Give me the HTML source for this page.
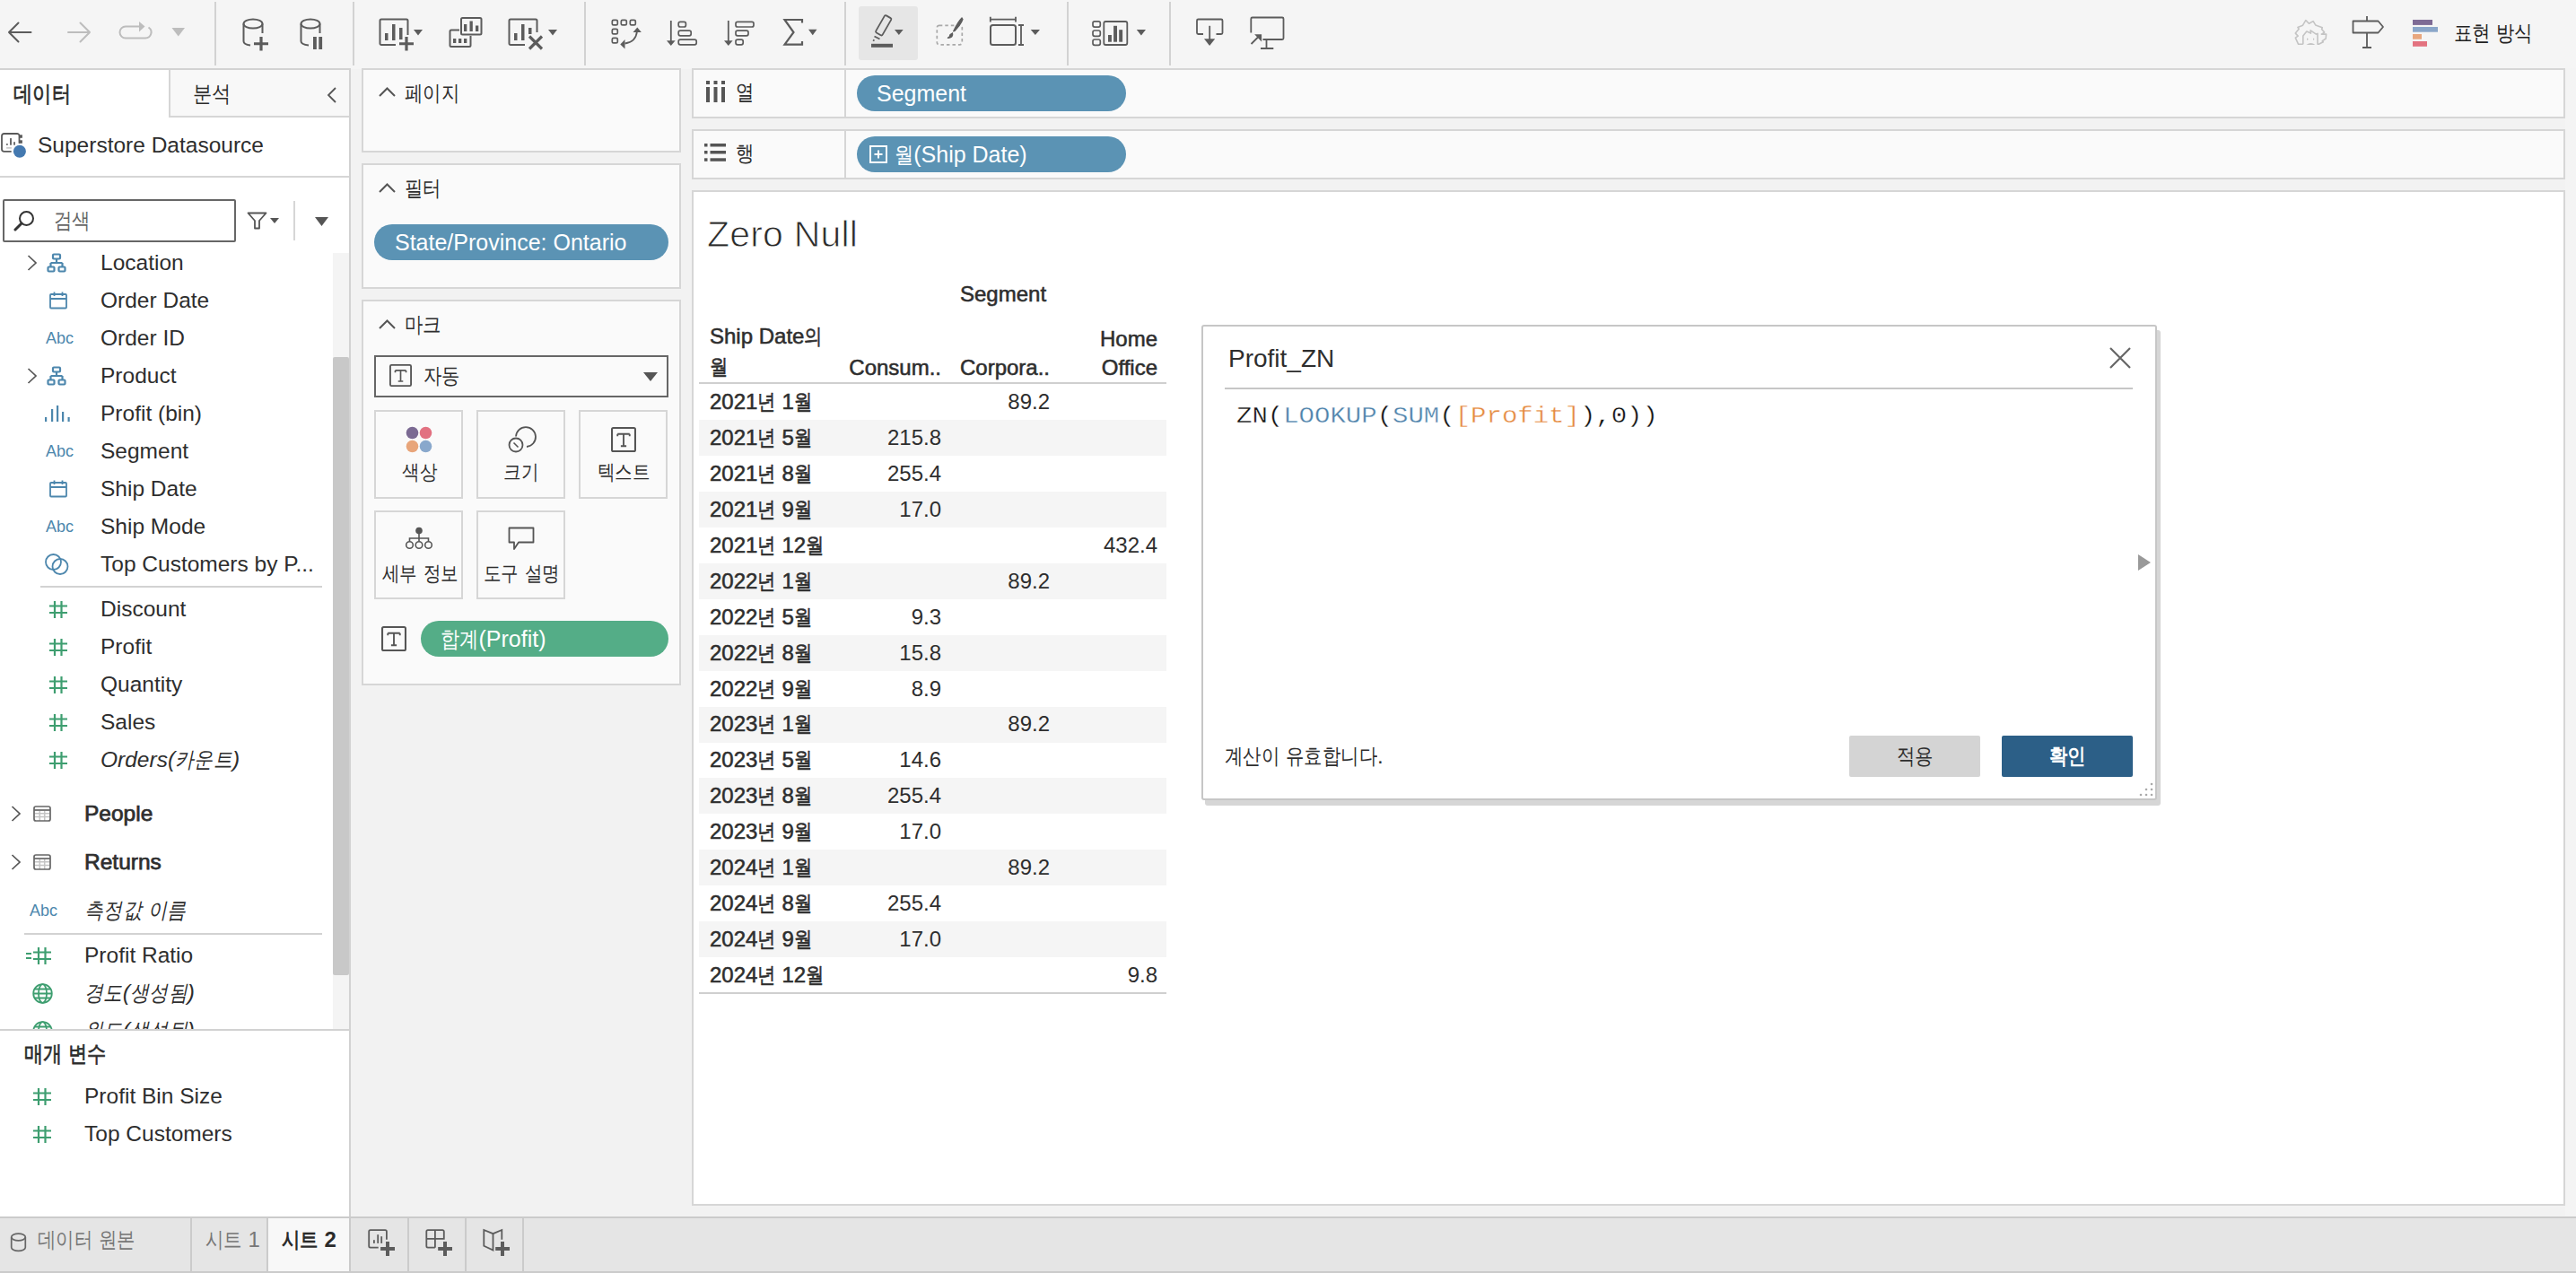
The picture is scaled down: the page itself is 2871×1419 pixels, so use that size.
<!DOCTYPE html>
<html><head><meta charset="utf-8">
<style>
*{box-sizing:border-box;margin:0;padding:0}
html,body{width:2871px;height:1419px;overflow:hidden}
body{position:relative;background:#f2f2f2;font-family:"Liberation Sans",sans-serif;color:#2e2e2e}
.a{position:absolute}
.t{position:absolute;white-space:nowrap}
svg{position:absolute;overflow:visible}
.k{display:inline-block;transform:scaleX(.85);transform-origin:0 50%}
.sb{-webkit-text-stroke:0.5px currentColor}
#toolbar{left:0;top:0;width:2871px;height:77px;background:#f5f5f5}
.sep{position:absolute;top:2px;width:2px;height:71px;background:#d2d2d2}
#left{left:0;top:76px;width:391px;height:1281px;background:#fff;border-right:2px solid #d2d2d2;border-top:2px solid #d2d2d2}
.card{position:absolute;background:#fafafa;border:2px solid #d6d6d6}
.shelf{position:absolute;background:#fafafa;border:2px solid #d6d6d6}
.pill{position:absolute;border-radius:20px;color:#fff;font-size:25px;line-height:40px;white-space:nowrap}
.fl{font-size:24.5px;line-height:30px;color:#2e2e2e}
.ic{color:#4d87ad}
.hash{color:#3e9e70}
.row{position:absolute;left:779px;width:521px;height:40px}
.rs{background:#f5f5f5}
.rl{position:absolute;left:12px;top:0;line-height:40px;font-size:24.5px;font-weight:bold;color:#2e2e2e;white-space:nowrap}
.rv{position:absolute;top:0;line-height:40px;font-size:24.5px;color:#2e2e2e;text-align:right;white-space:nowrap}
</style></head><body>

<!-- TOOLBAR -->
<div id="toolbar" class="a"></div>
<div class="sep" style="left:239px"></div>
<div class="sep" style="left:393px"></div>
<div class="sep" style="left:651px"></div>
<div class="sep" style="left:941px"></div>
<div class="sep" style="left:1189px"></div>
<div class="sep" style="left:1303px"></div>
<div class="a" style="left:957px;top:7px;width:66px;height:60px;background:#e6e6e6;border-radius:3px"></div>
<svg style="left:0;top:0" width="2871" height="77"><path d="M34.5 36 H10 M20.5 25.5 L10 36 L20.5 46.5" fill="none" stroke="#5c5c5c" stroke-width="2" stroke-linecap="round" stroke-linejoin="round"/><path d="M76 36 H100 M89.5 25.5 L100 36 L89.5 46.5" fill="none" stroke="#bdbdbd" stroke-width="2" stroke-linecap="round" stroke-linejoin="round"/><path d="M155 29.5 H140 A6.5 6.5 0 0 0 140 42.5 H162 A6.5 6.5 0 0 0 165.5 30.5" fill="none" stroke="#bdbdbd" stroke-width="2"/><path d="M155 24 L161.5 29.5 L155 35.5 Z" fill="#bdbdbd"/><path d="M191.5 31 H206 L198.75 40.5 Z" fill="#bdbdbd"/><ellipse cx="282" cy="26.5" rx="10.5" ry="5" fill="none" stroke="#5c5c5c" stroke-width="2"/><path d="M271.5 26.5 V46 Q271.5 49.5 279 50.5 M292.5 26.5 V37" fill="none" stroke="#5c5c5c" stroke-width="2"/><path d="M291 41 V56.5 M283 48.75 H299" stroke="#5c5c5c" stroke-width="3.2"/><ellipse cx="346" cy="26.5" rx="10.5" ry="5" fill="none" stroke="#5c5c5c" stroke-width="2"/><path d="M335.5 26.5 V46 Q335.5 49.5 344 50.5 M356.5 26.5 V37" fill="none" stroke="#5c5c5c" stroke-width="2"/><rect x="349" y="41" width="3.8" height="14" fill="#5c5c5c"/><rect x="355.3" y="41" width="3.8" height="14" fill="#5c5c5c"/><path d="M441 50 H425 A1.5 1.5 0 0 1 423.5 48.5 V23 A1.5 1.5 0 0 1 425 21.5 H453 A1.5 1.5 0 0 1 454.5 23 V39" fill="none" stroke="#5c5c5c" stroke-width="2"/><rect x="429" y="37" width="3.5" height="8" fill="#5c5c5c"/><rect x="437" y="27" width="3.5" height="18" fill="#5c5c5c"/><rect x="445" y="31" width="3.5" height="13" fill="#5c5c5c"/><path d="M453 41 V56.5 M445 48.75 H461" stroke="#5c5c5c" stroke-width="3.2"/><path d="M461 33 H471 L466 39.5 Z" fill="#5c5c5c"/><rect x="514" y="20" width="22.5" height="18.5" rx="1.5" fill="none" stroke="#5c5c5c" stroke-width="2"/><rect x="517" y="27" width="3.3" height="8" fill="#5c5c5c"/><rect x="523.5" y="23.5" width="3.3" height="11.5" fill="#5c5c5c"/><rect x="530" y="28.5" width="3.3" height="6.5" fill="#5c5c5c"/><path d="M512 33.5 H503 A1.5 1.5 0 0 0 501.5 35 V50.5 A1.5 1.5 0 0 0 503 52 H523 A1.5 1.5 0 0 0 524.5 50.5 V40" fill="none" stroke="#5c5c5c" stroke-width="2"/><rect x="505" y="43" width="3.3" height="5" fill="#5c5c5c"/><rect x="511" y="43" width="3.3" height="5" fill="#5c5c5c"/><rect x="517" y="43" width="3.3" height="5" fill="#5c5c5c"/><path d="M585 50 H569 A1.5 1.5 0 0 1 567.5 48.5 V23 A1.5 1.5 0 0 1 569 21.5 H597 A1.5 1.5 0 0 1 598.5 23 V36" fill="none" stroke="#5c5c5c" stroke-width="2"/><rect x="573" y="37" width="3.5" height="8" fill="#5c5c5c"/><rect x="581" y="27" width="3.5" height="18" fill="#5c5c5c"/><rect x="589" y="31" width="3.5" height="7" fill="#5c5c5c"/><path d="M590 40.5 L604 54.5 M604 40.5 L590 54.5" stroke="#5c5c5c" stroke-width="3.2"/><path d="M611 33 H621 L616 39.5 Z" fill="#5c5c5c"/><rect x="682.3" y="22.3" width="6" height="5.6" rx="1.5" fill="none" stroke="#5c5c5c" stroke-width="1.7"/><rect x="692.3" y="22.3" width="6" height="5.6" rx="1.5" fill="none" stroke="#5c5c5c" stroke-width="1.7"/><rect x="702.3" y="22.3" width="6" height="5.6" rx="1.5" fill="none" stroke="#5c5c5c" stroke-width="1.7"/><rect x="682.3" y="32.3" width="6" height="5.6" rx="1.5" fill="none" stroke="#5c5c5c" stroke-width="1.7"/><rect x="682.3" y="42.3" width="6" height="5.6" rx="1.5" fill="none" stroke="#5c5c5c" stroke-width="1.7"/><path d="M710 35 Q708.5 47 696.5 48.5" fill="none" stroke="#5c5c5c" stroke-width="1.8"/><path d="M710.3 30.5 L714.8 36 L705.5 36 Z" fill="#5c5c5c"/><path d="M691.3 49.5 L696.5 44 L696.5 54.5 Z" fill="#5c5c5c"/><path d="M747.8 23 V46" stroke="#5c5c5c" stroke-width="1.8"/><path d="M743 45.3 H752.6 L747.8 51 Z" fill="#5c5c5c"/><rect x="756.2" y="24.4" width="8.2" height="5.6" rx="2" fill="none" stroke="#5c5c5c" stroke-width="1.7"/><rect x="756.2" y="34.2" width="14" height="5.6" rx="2" fill="none" stroke="#5c5c5c" stroke-width="1.7"/><rect x="756.2" y="44.2" width="20" height="5.6" rx="2" fill="none" stroke="#5c5c5c" stroke-width="1.7"/><path d="M811.8 23 V46" stroke="#5c5c5c" stroke-width="1.8"/><path d="M807 45.3 H816.6 L811.8 51 Z" fill="#5c5c5c"/><rect x="820" y="24.4" width="20" height="5.6" rx="2" fill="none" stroke="#5c5c5c" stroke-width="1.7"/><rect x="820" y="34.2" width="14" height="5.6" rx="2" fill="none" stroke="#5c5c5c" stroke-width="1.7"/><rect x="820" y="44.2" width="8.2" height="5.6" rx="2" fill="none" stroke="#5c5c5c" stroke-width="1.7"/><path d="M894 25.5 V22 H874.5 L884.5 36 L874.5 49.7 H894 V46" fill="none" stroke="#5c5c5c" stroke-width="2.2"/><path d="M901 32.8 H910.5 L905.75 39.3 Z" fill="#5c5c5c"/><g transform="rotate(30 984 29)"><rect x="980" y="17" width="8.5" height="22" rx="1.5" fill="none" stroke="#5c5c5c" stroke-width="1.8"/></g><path d="M974.5 40.5 L980.5 43.5 M973 44.5 L974.5 45.5" stroke="#5c5c5c" stroke-width="1.8"/><rect x="971" y="48.8" width="24" height="4" fill="#5c5c5c"/><path d="M997 33.1 H1006.7 L1001.85 38.9 Z" fill="#5c5c5c"/><rect x="1044.3" y="28.3" width="28" height="21.5" rx="2.5" fill="none" stroke="#a9a9a9" stroke-width="1.7" stroke-dasharray="3.5 3"/><path d="M1072 20 Q1068 24 1063 34 Q1062 35.5 1064 34.5 Q1071 27 1073 21.5 Z" fill="#5c5c5c" stroke="#5c5c5c" stroke-width="1.2"/><path d="M1061.5 37 Q1063 42 1056 42.5 Q1059 41 1059 38.5 Z" fill="#5c5c5c" stroke="#5c5c5c" stroke-width="1.2"/><path d="M1103.8 18.8 V24.6 M1132 18.8 V24.6 M1103.8 21.7 H1132" stroke="#5c5c5c" stroke-width="1.8"/><rect x="1104" y="28" width="28" height="22" rx="2.5" fill="none" stroke="#5c5c5c" stroke-width="2"/><path d="M1135 28 H1141 M1138 28 V50 M1135 50 H1141" stroke="#5c5c5c" stroke-width="1.8"/><path d="M1148.7 33 H1159 L1153.85 39 Z" fill="#5c5c5c"/><rect x="1218" y="23.8" width="8.3" height="6.3" rx="2" fill="none" stroke="#5c5c5c" stroke-width="1.7"/><rect x="1218" y="34" width="8.3" height="6.3" rx="2" fill="none" stroke="#5c5c5c" stroke-width="1.7"/><rect x="1218" y="44" width="8.3" height="6.3" rx="2" fill="none" stroke="#5c5c5c" stroke-width="1.7"/><rect x="1230.3" y="24" width="26" height="26" rx="2" fill="none" stroke="#5c5c5c" stroke-width="1.8"/><rect x="1235" y="39" width="3.9" height="7.7" fill="#5c5c5c"/><rect x="1241.1" y="28.8" width="3.9" height="17.9" fill="#5c5c5c"/><rect x="1247.2" y="33.2" width="3.9" height="13.5" fill="#5c5c5c"/><path d="M1266.8 33 H1277 L1271.9 39.5 Z" fill="#5c5c5c"/><path d="M1341 38 H1335.5 A1.5 1.5 0 0 1 1334 36.5 V23 A1.5 1.5 0 0 1 1335.5 21.5 H1361 A1.5 1.5 0 0 1 1362.5 23 V36.5 A1.5 1.5 0 0 1 1361 38 H1355.5" fill="none" stroke="#5c5c5c" stroke-width="1.8"/><path d="M1348.2 28.8 V44" stroke="#5c5c5c" stroke-width="1.8"/><path d="M1342 43.3 H1354.2 L1348.1 51.1 Z" fill="#5c5c5c"/><path d="M1394.3 36.5 V21 A1.5 1.5 0 0 1 1395.8 19.5 H1429 A1.5 1.5 0 0 1 1430.5 21 V42.5 A1.5 1.5 0 0 1 1429 44 H1407.5" fill="none" stroke="#5c5c5c" stroke-width="1.8"/><path d="M1411.5 44 V53.5 M1405 54 H1419.3" stroke="#5c5c5c" stroke-width="1.8"/><path d="M1394.5 49 L1402 41.5" stroke="#5c5c5c" stroke-width="1.8"/><path d="M1400 39 H1405.3 V44.5 Z" fill="#5c5c5c" stroke="#5c5c5c" stroke-width="1.6"/><g fill="none" stroke="#c4c4c4" stroke-width="1.6" stroke-linejoin="round"><path d="M2566.8 49.3 H2561.6 L2558.3 42.1 L2561.2 40.1 L2558.3 37.1 L2562.2 32.2 L2560.9 30.5 L2566.5 28.2 L2569.8 22.6 L2573.4 26.2 L2578.1 23.6 L2580.7 27.9 L2588.3 30.8 L2587.6 32.5 L2590.6 36.1 L2587.3 38.1 L2592.6 38.1 L2592.2 43 L2588.3 45.7 L2589.3 46.7 L2584.3 49.3 H2583"/><path d="M2566.8 49.3 V40.1 L2570.8 35.1 L2575.4 37.1 L2575.1 33.8 L2581.4 38.1 L2583 37.4 V49.7"/></g><g fill="#c4c4c4"><path d="M2571 42.3 L2573 43.7 L2571 45.1 Z"/><path d="M2578 42.3 L2579.6 43.7 L2578 45.1 Z"/><path d="M2570.5 50 Q2575.4 46 2580.4 50 Z"/></g><path d="M2622.5 23.5 H2650.5 L2656 30 L2650.5 36.5 H2622.5 Z" fill="none" stroke="#5c5c5c" stroke-width="1.8" stroke-linejoin="round"/><path d="M2638 18 V23.5 M2638 36.5 V53 M2633 53 H2643" stroke="#5c5c5c" stroke-width="1.8"/><rect x="2689" y="22" width="22" height="5.9" fill="#7e6b95"/><rect x="2689" y="30" width="28" height="5.7" fill="#8aa6c9"/><rect x="2689" y="38" width="10" height="5.7" fill="#e8a77e"/><rect x="2689" y="46" width="16" height="5.8" fill="#e3727f"/></svg>
<div class="t" style="left:2735px;top:19px;font-size:24px;line-height:36px;color:#222"><span class="k" style="margin-right:-0.30em">표현</span> <span class="k" style="margin-right:-0.30em">방식</span></div>

<!-- LEFT PANEL -->
<div id="left" class="a"></div>

<div class="a" style="left:188px;top:78px;width:201px;height:53px;background:#f8f8f8;border-left:2px solid #d6d6d6;border-bottom:2px solid #d6d6d6"></div>
<div class="t" style="left:15px;top:89px;font-size:25px;line-height:30px;font-weight:normal;-webkit-text-stroke:0.7px #2b2b2b;color:#2b2b2b"><span class="k" style="margin-right:-0.45em">데이터</span></div>
<div class="t" style="left:215px;top:89px;font-size:25px;line-height:30px;color:#2b2b2b"><span class="k" style="margin-right:-0.30em">분석</span></div>
<svg style="left:364px;top:97px" width="11" height="18"><path d="M10 1 L2 9 L10 17" fill="none" stroke="#555" stroke-width="1.8"/></svg>
<svg style="left:0;top:140px" width="32" height="40"><path d="M12.7 28.8 H4.5 A2.5 2.5 0 0 1 2 26.3 V11.5 A2.5 2.5 0 0 1 4.5 9 H19 A2.5 2.5 0 0 1 21.5 11.5 V19.8" fill="none" stroke="#5a5a5a" stroke-width="1.8"/><rect x="21.2" y="10.3" width="3.7" height="3.5" fill="#5a5a5a"/><rect x="21.2" y="16.3" width="3.7" height="3.5" fill="#5a5a5a"/><rect x="6.9" y="20.2" width="1.9" height="1.6" fill="#5a5a5a"/><rect x="11.1" y="14.1" width="1.8" height="7.6" fill="#5a5a5a"/><rect x="15.2" y="18.2" width="1.7" height="3.5" fill="#5a5a5a"/><rect x="7.1" y="24" width="5.8" height="1.8" fill="#cfcfcf"/><circle cx="21.9" cy="28.8" r="7" fill="#4479b0"/></svg>
<div class="t fl" style="left:42px;top:147px;">Superstore Datasource</div>
<div class="a" style="left:0;top:196px;width:389px;height:2px;background:#d6d6d6"></div>
<div class="a" style="left:3px;top:222px;width:260px;height:48px;border:2px solid #666;background:#fff;border-radius:2px"></div>
<svg style="left:15px;top:234px" width="24" height="24" viewBox="0 0 24 24"><circle cx="14.5" cy="9.5" r="7.5" fill="none" stroke="#333" stroke-width="2"/><path d="M9 15 L2 22" stroke="#333" stroke-width="3" stroke-linecap="round"/></svg>
<div class="t" style="left:60px;top:231px;font-size:24px;line-height:30px;color:#666"><span class="k" style="margin-right:-0.30em">검색</span></div>
<svg style="left:275px;top:236px" width="36" height="20" viewBox="0 0 36 20"><path d="M1.5 1.5 H21.5 L14 10 V18.5 H9 V10 Z" fill="none" stroke="#555" stroke-width="1.8" stroke-linejoin="round"/><path d="M26 7 H36 L31 13 Z" fill="#555"/></svg>
<div class="a" style="left:327px;top:224px;width:2px;height:44px;background:#d6d6d6"></div>
<svg style="left:351px;top:242px" width="15" height="10"><path d="M0 0 H15 L7.5 10 Z" fill="#555"/></svg>
<div class="a" style="left:371px;top:282px;width:18px;height:865px;background:#f4f4f4"></div>
<div class="a" style="left:371px;top:398px;width:18px;height:689px;background:#c8c8c8;border-radius:2px"></div>
<svg style="left:30px;top:284px" width="12" height="18"><path d="M1.5 1 L10 9 L1.5 17" fill="none" stroke="#555" stroke-width="1.7"/></svg>
<svg style="left:52px;top:282px" width="22" height="22" viewBox="0 0 22 22"><g fill="none" stroke="#4d87ad" stroke-width="2.2"><rect x="7" y="1.5" width="8" height="5" rx="1"/><path d="M11 6.5 V11 M4.5 11 H17.5 M4.5 11 V15.5 M17.5 11 V15.5"/><rect x="1.5" y="15.5" width="7" height="5" rx="1"/><rect x="13.5" y="15.5" width="7" height="5" rx="1"/></g></svg>
<div class="t fl" style="left:112px;top:278px;">Location</div>
<svg style="left:55px;top:325px" width="20" height="20" viewBox="0 0 20 20"><g fill="none" stroke="#4d87ad" stroke-width="1.8"><rect x="1" y="3" width="18" height="15.5" rx="1"/><path d="M1 8 H19 M5.5 0.5 V5 M14.5 0.5 V5"/></g></svg>
<div class="t fl" style="left:112px;top:320px;">Order Date</div>
<div class="t" style="left:51px;top:364px;font-size:18px;line-height:26px;color:#4d87ad">Abc</div>
<div class="t fl" style="left:112px;top:362px;">Order ID</div>
<svg style="left:30px;top:410px" width="12" height="18"><path d="M1.5 1 L10 9 L1.5 17" fill="none" stroke="#555" stroke-width="1.7"/></svg>
<svg style="left:52px;top:408px" width="22" height="22" viewBox="0 0 22 22"><g fill="none" stroke="#4d87ad" stroke-width="2.2"><rect x="7" y="1.5" width="8" height="5" rx="1"/><path d="M11 6.5 V11 M4.5 11 H17.5 M4.5 11 V15.5 M17.5 11 V15.5"/><rect x="1.5" y="15.5" width="7" height="5" rx="1"/><rect x="13.5" y="15.5" width="7" height="5" rx="1"/></g></svg>
<div class="t fl" style="left:112px;top:404px;">Product</div>
<svg style="left:50px;top:452px" width="28" height="18" viewBox="0 0 28 18"><g fill="#4d87ad"><rect x="0" y="13" width="2.2" height="5"/><rect x="7" y="4" width="2.2" height="14"/><rect x="13" y="0" width="2.2" height="18"/><rect x="19" y="7" width="2.2" height="11"/><rect x="25.5" y="13" width="2.2" height="5"/></g></svg>
<div class="t fl" style="left:112px;top:446px;">Profit (bin)</div>
<div class="t" style="left:51px;top:490px;font-size:18px;line-height:26px;color:#4d87ad">Abc</div>
<div class="t fl" style="left:112px;top:488px;">Segment</div>
<svg style="left:55px;top:535px" width="20" height="20" viewBox="0 0 20 20"><g fill="none" stroke="#4d87ad" stroke-width="1.8"><rect x="1" y="3" width="18" height="15.5" rx="1"/><path d="M1 8 H19 M5.5 0.5 V5 M14.5 0.5 V5"/></g></svg>
<div class="t fl" style="left:112px;top:530px;">Ship Date</div>
<div class="t" style="left:51px;top:574px;font-size:18px;line-height:26px;color:#4d87ad">Abc</div>
<div class="t fl" style="left:112px;top:572px;">Ship Mode</div>
<svg style="left:50px;top:617px" width="27" height="24" viewBox="0 0 27 24"><g fill="none" stroke="#4d87ad" stroke-width="1.8"><circle cx="9.5" cy="9.5" r="8.5"/><circle cx="17" cy="14.5" r="8.5"/></g></svg>
<div class="t fl" style="left:112px;top:614px;">Top Customers by P...</div>
<div class="a" style="left:45px;top:653px;width:314px;height:2px;background:#d2d2d2"></div>
<svg style="left:55px;top:670px" width="20" height="19" viewBox="0 0 20 19"><g stroke="#3e9e70" stroke-width="2.2" fill="none"><path d="M6 0 V19 M13.5 0 V19 M0 5.5 H20 M0 13 H20"/></g></svg>
<div class="t fl" style="left:112px;top:664px;">Discount</div>
<svg style="left:55px;top:712px" width="20" height="19" viewBox="0 0 20 19"><g stroke="#3e9e70" stroke-width="2.2" fill="none"><path d="M6 0 V19 M13.5 0 V19 M0 5.5 H20 M0 13 H20"/></g></svg>
<div class="t fl" style="left:112px;top:706px;">Profit</div>
<svg style="left:55px;top:754px" width="20" height="19" viewBox="0 0 20 19"><g stroke="#3e9e70" stroke-width="2.2" fill="none"><path d="M6 0 V19 M13.5 0 V19 M0 5.5 H20 M0 13 H20"/></g></svg>
<div class="t fl" style="left:112px;top:748px;">Quantity</div>
<svg style="left:55px;top:796px" width="20" height="19" viewBox="0 0 20 19"><g stroke="#3e9e70" stroke-width="2.2" fill="none"><path d="M6 0 V19 M13.5 0 V19 M0 5.5 H20 M0 13 H20"/></g></svg>
<div class="t fl" style="left:112px;top:790px;">Sales</div>
<svg style="left:55px;top:838px" width="20" height="19" viewBox="0 0 20 19"><g stroke="#3e9e70" stroke-width="2.2" fill="none"><path d="M6 0 V19 M13.5 0 V19 M0 5.5 H20 M0 13 H20"/></g></svg>
<div class="t fl" style="left:112px;top:832px;font-style:italic">Orders(<span class="k" style="margin-right:-0.45em">카운트</span>)</div>
<svg style="left:12px;top:898px" width="12" height="18"><path d="M1.5 1 L10 9 L1.5 17" fill="none" stroke="#555" stroke-width="1.7"/></svg>
<svg style="left:37px;top:898px" width="20" height="18" viewBox="0 0 20 18"><g fill="none" stroke="#c4c4c4" stroke-width="1.5"><path d="M2 8.7 H18 M2 12.5 H18 M7.3 6 V17 M12.7 6 V17"/></g><g fill="none" stroke="#666" stroke-width="1.7"><rect x="1" y="1" width="18" height="16" rx="2"/><path d="M1 5 H19"/></g></svg>
<div class="t fl" style="left:94px;top:892px;-webkit-text-stroke:0.75px #2e2e2e">People</div>
<svg style="left:12px;top:952px" width="12" height="18"><path d="M1.5 1 L10 9 L1.5 17" fill="none" stroke="#555" stroke-width="1.7"/></svg>
<svg style="left:37px;top:952px" width="20" height="18" viewBox="0 0 20 18"><g fill="none" stroke="#c4c4c4" stroke-width="1.5"><path d="M2 8.7 H18 M2 12.5 H18 M7.3 6 V17 M12.7 6 V17"/></g><g fill="none" stroke="#666" stroke-width="1.7"><rect x="1" y="1" width="18" height="16" rx="2"/><path d="M1 5 H19"/></g></svg>
<div class="t fl" style="left:94px;top:946px;-webkit-text-stroke:0.75px #2e2e2e">Returns</div>
<div class="t" style="left:33px;top:1002px;font-size:18px;line-height:26px;color:#4d87ad">Abc</div>
<div class="t fl" style="left:94px;top:1000px;font-style:italic"><span class="k" style="margin-right:-0.45em">측정값</span> <span class="k" style="margin-right:-0.30em">이름</span></div>
<div class="a" style="left:27px;top:1040px;width:332px;height:2px;background:#d2d2d2"></div>
<svg style="left:37px;top:1056px" width="20" height="19" viewBox="0 0 20 19"><g stroke="#3e9e70" stroke-width="2.2" fill="none"><path d="M6 0 V19 M13.5 0 V19 M0 5.5 H20 M0 13 H20"/></g></svg><svg style="left:29px;top:1056px" width="8" height="19" viewBox="0 0 8 19"><g stroke="#3e9e70" stroke-width="2"><path d="M0 7 H6 M0 12 H6"/></g></svg>
<div class="t fl" style="left:94px;top:1050px;">Profit Ratio</div>
<svg style="left:36px;top:1096px" width="23" height="23" viewBox="0 0 23 23"><g fill="none" stroke="#3e9e70" stroke-width="1.8"><circle cx="11.5" cy="11.5" r="10.3"/><ellipse cx="11.5" cy="11.5" rx="4.5" ry="10.3"/><path d="M1.2 11.5 H21.8 M2.8 6.5 H20.2 M2.8 16.5 H20.2"/></g></svg>
<div class="t fl" style="left:94px;top:1092px;font-style:italic"><span class="k" style="margin-right:-0.30em">경도</span>(<span class="k" style="margin-right:-0.45em">생성됨</span>)</div>
<div class="a" style="left:0;top:1130px;width:371px;height:17px;overflow:hidden"><svg style="left:36px;top:8px" width="23" height="23" viewBox="0 0 23 23"><g fill="none" stroke="#3e9e70" stroke-width="1.8"><circle cx="11.5" cy="11.5" r="10.3"/><ellipse cx="11.5" cy="11.5" rx="4.5" ry="10.3"/><path d="M1.2 11.5 H21.8 M2.8 6.5 H20.2 M2.8 16.5 H20.2"/></g></svg><div class="t fl" style="left:94px;top:4px;font-style:italic"><span class="k" style="margin-right:-0.30em">위도</span>(<span class="k" style="margin-right:-0.45em">생성됨</span>)</div></div>
<div class="a" style="left:0;top:1147px;width:389px;height:2px;background:#d2d2d2"></div>
<div class="t" style="left:27px;top:1160px;font-size:24.5px;line-height:30px;font-weight:normal;-webkit-text-stroke:0.7px #2b2b2b;color:#2b2b2b"><span class="k" style="margin-right:-0.30em">매개</span> <span class="k" style="margin-right:-0.30em">변수</span></div>
<svg style="left:37px;top:1213px" width="20" height="19" viewBox="0 0 20 19"><g stroke="#3e9e70" stroke-width="2.2" fill="none"><path d="M6 0 V19 M13.5 0 V19 M0 5.5 H20 M0 13 H20"/></g></svg>
<div class="t fl" style="left:94px;top:1207px;">Profit Bin Size</div>
<svg style="left:37px;top:1255px" width="20" height="19" viewBox="0 0 20 19"><g stroke="#3e9e70" stroke-width="2.2" fill="none"><path d="M6 0 V19 M13.5 0 V19 M0 5.5 H20 M0 13 H20"/></g></svg>
<div class="t fl" style="left:94px;top:1249px;">Top Customers</div>

<!-- MIDDLE PANEL CARDS -->
<div class="card" style="left:403px;top:76px;width:356px;height:94px"></div>
<div class="card" style="left:403px;top:182px;width:356px;height:140px"></div>
<div class="card" style="left:403px;top:334px;width:356px;height:430px"></div>
<svg style="left:422px;top:97px" width="19" height="11"><path d="M1 10 L9.5 1.5 L18 10" fill="none" stroke="#555" stroke-width="2"/></svg>
<div class="t" style="left:451px;top:89.0px;font-size:24px;line-height:30px;color:#2e2e2e;"><span class="k" style="margin-right:-0.45em">페이지</span></div>
<svg style="left:422px;top:204px" width="19" height="11"><path d="M1 10 L9.5 1.5 L18 10" fill="none" stroke="#555" stroke-width="2"/></svg>
<div class="t" style="left:451px;top:195.0px;font-size:24px;line-height:30px;color:#2e2e2e;"><span class="k" style="margin-right:-0.30em">필터</span></div>
<div class="pill" style="left:417px;top:250px;width:328px;height:40px;background:#5b93b4;padding-left:23px">State/Province: Ontario</div>
<svg style="left:422px;top:356px" width="19" height="11"><path d="M1 10 L9.5 1.5 L18 10" fill="none" stroke="#555" stroke-width="2"/></svg>
<div class="t" style="left:451px;top:347.0px;font-size:24px;line-height:30px;color:#2e2e2e;"><span class="k" style="margin-right:-0.30em">마크</span></div>
<div class="a" style="left:417px;top:396px;width:328px;height:47px;border:2px solid #666;background:#fafafa"></div>
<svg style="left:434px;top:406px" width="25" height="25" viewBox="0 0 27 27"><rect x="1" y="1" width="25" height="25" rx="1.5" fill="none" stroke="#555" stroke-width="2"/><path d="M7 7.5 H20 M13.5 7.5 V20.5 M10.5 20.5 H16.5 M7 7.5 V10 M20 7.5 V10" fill="none" stroke="#555" stroke-width="1.8"/></svg>
<div class="t" style="left:472px;top:404.0px;font-size:24px;line-height:30px;color:#2e2e2e;"><span class="k" style="margin-right:-0.30em">자동</span></div>
<svg style="left:717px;top:415px" width="16" height="10"><path d="M0 0 H16 L8 10 Z" fill="#555"/></svg>
<div class="a" style="left:417px;top:457px;width:99px;height:99px;border:2px solid #d6d6d6;background:#fafafa"></div>
<div class="a" style="left:531px;top:457px;width:99px;height:99px;border:2px solid #d6d6d6;background:#fafafa"></div>
<div class="a" style="left:645px;top:457px;width:99px;height:99px;border:2px solid #d6d6d6;background:#fafafa"></div>
<div class="a" style="left:417px;top:569px;width:99px;height:99px;border:2px solid #d6d6d6;background:#fafafa"></div>
<div class="a" style="left:531px;top:569px;width:99px;height:99px;border:2px solid #d6d6d6;background:#fafafa"></div>
<svg style="left:452px;top:475px" width="30" height="30"><circle cx="7.5" cy="7.5" r="6.8" fill="#7b6a93"/><circle cx="22.5" cy="7.5" r="6.8" fill="#e27181"/><circle cx="7.5" cy="22.5" r="6.8" fill="#e8a57a"/><circle cx="22.5" cy="22.5" r="6.8" fill="#89a8cc"/></svg>
<svg style="left:566px;top:475px" width="30" height="30" viewBox="0 0 30 30"><path d="M9 11.5 A11 11 0 1 1 21 23" fill="none" stroke="#555" stroke-width="1.8"/><circle cx="9" cy="21" r="7.5" fill="none" stroke="#555" stroke-width="1.8"/><path d="M6.5 18.5 L11.5 23.5" stroke="#555" stroke-width="1.6"/></svg>
<svg style="left:681px;top:476px" width="28" height="28" viewBox="0 0 27 27"><rect x="1" y="1" width="25" height="25" rx="1.5" fill="none" stroke="#555" stroke-width="2"/><path d="M7 7.5 H20 M13.5 7.5 V20.5 M10.5 20.5 H16.5 M7 7.5 V10 M20 7.5 V10" fill="none" stroke="#555" stroke-width="1.8"/></svg>
<div class="t" style="left:468px;top:511.0px;font-size:23px;line-height:30px;color:#2e2e2e;transform:translateX(-50%)"><span class="k" style="margin-right:-0.30em">색상</span></div>
<div class="t" style="left:581px;top:511.0px;font-size:23px;line-height:30px;color:#2e2e2e;transform:translateX(-50%)"><span class="k" style="margin-right:-0.30em">크기</span></div>
<div class="t" style="left:695px;top:511.0px;font-size:23px;line-height:30px;color:#2e2e2e;transform:translateX(-50%)"><span class="k" style="margin-right:-0.45em">텍스트</span></div>
<svg style="left:452px;top:584px" width="30" height="32" viewBox="0 0 30 32"><circle cx="15" cy="7.5" r="3.8" fill="#555"/><path d="M15 11 V19 M4.5 19 V16 H25.5 V19" fill="none" stroke="#555" stroke-width="1.6"/><circle cx="4.5" cy="23.5" r="3.8" fill="none" stroke="#555" stroke-width="1.6"/><circle cx="15" cy="23.5" r="3.8" fill="none" stroke="#555" stroke-width="1.6"/><circle cx="25.5" cy="23.5" r="3.8" fill="none" stroke="#555" stroke-width="1.6"/></svg>
<svg style="left:566px;top:587px" width="30" height="28" viewBox="0 0 30 28"><path d="M1.5 1.5 H28.5 V17.5 H12 L7 25 V17.5 H1.5 Z" fill="none" stroke="#555" stroke-width="1.8" stroke-linejoin="round"/></svg>
<div class="t" style="left:468px;top:624.0px;font-size:23px;line-height:30px;color:#2e2e2e;transform:translateX(-50%)"><span class="k" style="margin-right:-0.30em">세부</span> <span class="k" style="margin-right:-0.30em">정보</span></div>
<div class="t" style="left:581px;top:624.0px;font-size:23px;line-height:30px;color:#2e2e2e;transform:translateX(-50%)"><span class="k" style="margin-right:-0.30em">도구</span> <span class="k" style="margin-right:-0.30em">설명</span></div>
<svg style="left:425px;top:698px" width="28" height="28" viewBox="0 0 27 27"><rect x="1" y="1" width="25" height="25" rx="1.5" fill="none" stroke="#555" stroke-width="2"/><path d="M7 7.5 H20 M13.5 7.5 V20.5 M10.5 20.5 H16.5 M7 7.5 V10 M20 7.5 V10" fill="none" stroke="#555" stroke-width="1.8"/></svg>
<div class="pill" style="left:469px;top:692px;width:276px;height:40px;background:#54ad87;padding-left:22px"><span class="k" style="margin-right:-0.30em">합계</span>(Profit)</div>
<!-- SHELVES -->
<div class="shelf" style="left:771px;top:76px;width:2088px;height:56px"><div class="a" style="left:168px;top:0;width:2px;height:52px;background:#d6d6d6"></div></div>
<div class="shelf" style="left:771px;top:144px;width:2088px;height:56px"><div class="a" style="left:168px;top:0;width:2px;height:52px;background:#d6d6d6"></div></div>
<svg style="left:787px;top:90px" width="21" height="24" viewBox="0 0 21 24"><g fill="#555"><rect x="0" y="0" width="4" height="4"/><rect x="8.5" y="0" width="4" height="4"/><rect x="17" y="0" width="4" height="4"/><rect x="0" y="7" width="4" height="17"/><rect x="8.5" y="7" width="4" height="17"/><rect x="17" y="7" width="4" height="17"/></g></svg>
<div class="t" style="left:820px;top:88.0px;font-size:24px;line-height:30px;color:#2e2e2e;"><span class="k" style="margin-right:-0.15em">열</span></div>
<svg style="left:785px;top:160px" width="24" height="20" viewBox="0 0 24 20"><g fill="#555"><rect x="0" y="0" width="3.5" height="3.5"/><rect x="6.5" y="0" width="17.5" height="3.5"/><rect x="0" y="8" width="3.5" height="3.5"/><rect x="6.5" y="8" width="17.5" height="3.5"/><rect x="0" y="16.3" width="3.5" height="3.5"/><rect x="6.5" y="16.3" width="17.5" height="3.5"/></g></svg>
<div class="t" style="left:820px;top:156.0px;font-size:24px;line-height:30px;color:#2e2e2e;"><span class="k" style="margin-right:-0.15em">행</span></div>
<div class="pill" style="left:955px;top:84px;width:300px;height:40px;background:#5b93b4;padding-left:22px">Segment</div>
<div class="pill" style="left:955px;top:152px;width:300px;height:40px;background:#5b93b4;padding-left:42px"><span class="k" style="margin-right:-0.15em">월</span>(Ship Date)</div>
<svg style="left:969px;top:162px" width="20" height="20" viewBox="0 0 20 20"><rect x="1" y="1" width="18" height="18" fill="none" stroke="#fff" stroke-width="2"/><path d="M10 5.5 V14.5 M5.5 10 H14.5" stroke="#fff" stroke-width="2"/></svg>
<!-- CANVAS -->
<div class="a" style="left:771px;top:212px;width:2088px;height:1132px;background:#fff;border:2px solid #d6d6d6"></div>
<div class="a" style="left:2859px;top:76px;width:12px;height:1280px;background:#f4f4f4"></div>
<div class="t" style="left:788px;top:236px;font-size:41px;line-height:50px;color:#2a2a2a;-webkit-text-stroke:0.9px #fff;letter-spacing:0.2px">Zero Null</div>
<div class="t" style="left:1070px;top:313.0px;font-size:24px;line-height:30px;color:#2e2e2e;font-weight:normal;-webkit-text-stroke:0.55px #2e2e2e">Segment</div>
<div class="t" style="left:791px;top:360.0px;font-size:24px;line-height:30px;color:#2e2e2e;font-weight:normal;-webkit-text-stroke:0.55px #2e2e2e">Ship Date<span class="k" style="margin-right:-0.15em">의</span></div>
<div class="t" style="left:791px;top:394.0px;font-size:24px;line-height:30px;color:#2e2e2e;font-weight:normal;-webkit-text-stroke:0.55px #2e2e2e"><span class="k" style="margin-right:-0.15em">월</span></div>
<div class="t" style="left:749px;width:300px;text-align:right;top:395px;font-size:24px;line-height:30px;color:#2e2e2e;font-weight:normal;-webkit-text-stroke:0.55px #2e2e2e">Consum..</div>
<div class="t" style="left:870px;width:300px;text-align:right;top:395px;font-size:24px;line-height:30px;color:#2e2e2e;font-weight:normal;-webkit-text-stroke:0.55px #2e2e2e">Corpora..</div>
<div class="t" style="left:990px;width:300px;text-align:right;top:363px;font-size:24px;line-height:30px;color:#2e2e2e;font-weight:normal;-webkit-text-stroke:0.55px #2e2e2e">Home</div>
<div class="t" style="left:990px;width:300px;text-align:right;top:395px;font-size:24px;line-height:30px;color:#2e2e2e;font-weight:normal;-webkit-text-stroke:0.55px #2e2e2e">Office</div>
<div class="a" style="left:779px;top:426px;width:521px;height:2px;background:#cfcfcf"></div>
<div class="t" style="left:791px;top:433.0px;font-size:24px;line-height:30px;color:#2e2e2e;font-weight:normal;-webkit-text-stroke:0.55px #2e2e2e">2021<span class="k" style="margin-right:-0.15em">년</span> 1<span class="k" style="margin-right:-0.15em">월</span></div>
<div class="t" style="left:870px;width:300px;text-align:right;top:433.0px;font-size:24px;line-height:30px;color:#2e2e2e;">89.2</div>
<div class="a" style="left:779px;top:467.9px;width:521px;height:40px;background:#f5f5f5"></div>
<div class="t" style="left:791px;top:472.94px;font-size:24px;line-height:30px;color:#2e2e2e;font-weight:normal;-webkit-text-stroke:0.55px #2e2e2e">2021<span class="k" style="margin-right:-0.15em">년</span> 5<span class="k" style="margin-right:-0.15em">월</span></div>
<div class="t" style="left:749px;width:300px;text-align:right;top:472.94px;font-size:24px;line-height:30px;color:#2e2e2e;">215.8</div>
<div class="t" style="left:791px;top:512.88px;font-size:24px;line-height:30px;color:#2e2e2e;font-weight:normal;-webkit-text-stroke:0.55px #2e2e2e">2021<span class="k" style="margin-right:-0.15em">년</span> 8<span class="k" style="margin-right:-0.15em">월</span></div>
<div class="t" style="left:749px;width:300px;text-align:right;top:512.88px;font-size:24px;line-height:30px;color:#2e2e2e;">255.4</div>
<div class="a" style="left:779px;top:547.8px;width:521px;height:40px;background:#f5f5f5"></div>
<div class="t" style="left:791px;top:552.8199999999999px;font-size:24px;line-height:30px;color:#2e2e2e;font-weight:normal;-webkit-text-stroke:0.55px #2e2e2e">2021<span class="k" style="margin-right:-0.15em">년</span> 9<span class="k" style="margin-right:-0.15em">월</span></div>
<div class="t" style="left:749px;width:300px;text-align:right;top:552.8199999999999px;font-size:24px;line-height:30px;color:#2e2e2e;">17.0</div>
<div class="t" style="left:791px;top:592.76px;font-size:24px;line-height:30px;color:#2e2e2e;font-weight:normal;-webkit-text-stroke:0.55px #2e2e2e">2021<span class="k" style="margin-right:-0.15em">년</span> 12<span class="k" style="margin-right:-0.15em">월</span></div>
<div class="t" style="left:990px;width:300px;text-align:right;top:592.76px;font-size:24px;line-height:30px;color:#2e2e2e;">432.4</div>
<div class="a" style="left:779px;top:627.7px;width:521px;height:40px;background:#f5f5f5"></div>
<div class="t" style="left:791px;top:632.7px;font-size:24px;line-height:30px;color:#2e2e2e;font-weight:normal;-webkit-text-stroke:0.55px #2e2e2e">2022<span class="k" style="margin-right:-0.15em">년</span> 1<span class="k" style="margin-right:-0.15em">월</span></div>
<div class="t" style="left:870px;width:300px;text-align:right;top:632.7px;font-size:24px;line-height:30px;color:#2e2e2e;">89.2</div>
<div class="t" style="left:791px;top:672.64px;font-size:24px;line-height:30px;color:#2e2e2e;font-weight:normal;-webkit-text-stroke:0.55px #2e2e2e">2022<span class="k" style="margin-right:-0.15em">년</span> 5<span class="k" style="margin-right:-0.15em">월</span></div>
<div class="t" style="left:749px;width:300px;text-align:right;top:672.64px;font-size:24px;line-height:30px;color:#2e2e2e;">9.3</div>
<div class="a" style="left:779px;top:707.6px;width:521px;height:40px;background:#f5f5f5"></div>
<div class="t" style="left:791px;top:712.5799999999999px;font-size:24px;line-height:30px;color:#2e2e2e;font-weight:normal;-webkit-text-stroke:0.55px #2e2e2e">2022<span class="k" style="margin-right:-0.15em">년</span> 8<span class="k" style="margin-right:-0.15em">월</span></div>
<div class="t" style="left:749px;width:300px;text-align:right;top:712.5799999999999px;font-size:24px;line-height:30px;color:#2e2e2e;">15.8</div>
<div class="t" style="left:791px;top:752.52px;font-size:24px;line-height:30px;color:#2e2e2e;font-weight:normal;-webkit-text-stroke:0.55px #2e2e2e">2022<span class="k" style="margin-right:-0.15em">년</span> 9<span class="k" style="margin-right:-0.15em">월</span></div>
<div class="t" style="left:749px;width:300px;text-align:right;top:752.52px;font-size:24px;line-height:30px;color:#2e2e2e;">8.9</div>
<div class="a" style="left:779px;top:787.5px;width:521px;height:40px;background:#f5f5f5"></div>
<div class="t" style="left:791px;top:792.46px;font-size:24px;line-height:30px;color:#2e2e2e;font-weight:normal;-webkit-text-stroke:0.55px #2e2e2e">2023<span class="k" style="margin-right:-0.15em">년</span> 1<span class="k" style="margin-right:-0.15em">월</span></div>
<div class="t" style="left:870px;width:300px;text-align:right;top:792.46px;font-size:24px;line-height:30px;color:#2e2e2e;">89.2</div>
<div class="t" style="left:791px;top:832.4px;font-size:24px;line-height:30px;color:#2e2e2e;font-weight:normal;-webkit-text-stroke:0.55px #2e2e2e">2023<span class="k" style="margin-right:-0.15em">년</span> 5<span class="k" style="margin-right:-0.15em">월</span></div>
<div class="t" style="left:749px;width:300px;text-align:right;top:832.4px;font-size:24px;line-height:30px;color:#2e2e2e;">14.6</div>
<div class="a" style="left:779px;top:867.3px;width:521px;height:40px;background:#f5f5f5"></div>
<div class="t" style="left:791px;top:872.3399999999999px;font-size:24px;line-height:30px;color:#2e2e2e;font-weight:normal;-webkit-text-stroke:0.55px #2e2e2e">2023<span class="k" style="margin-right:-0.15em">년</span> 8<span class="k" style="margin-right:-0.15em">월</span></div>
<div class="t" style="left:749px;width:300px;text-align:right;top:872.3399999999999px;font-size:24px;line-height:30px;color:#2e2e2e;">255.4</div>
<div class="t" style="left:791px;top:912.28px;font-size:24px;line-height:30px;color:#2e2e2e;font-weight:normal;-webkit-text-stroke:0.55px #2e2e2e">2023<span class="k" style="margin-right:-0.15em">년</span> 9<span class="k" style="margin-right:-0.15em">월</span></div>
<div class="t" style="left:749px;width:300px;text-align:right;top:912.28px;font-size:24px;line-height:30px;color:#2e2e2e;">17.0</div>
<div class="a" style="left:779px;top:947.2px;width:521px;height:40px;background:#f5f5f5"></div>
<div class="t" style="left:791px;top:952.22px;font-size:24px;line-height:30px;color:#2e2e2e;font-weight:normal;-webkit-text-stroke:0.55px #2e2e2e">2024<span class="k" style="margin-right:-0.15em">년</span> 1<span class="k" style="margin-right:-0.15em">월</span></div>
<div class="t" style="left:870px;width:300px;text-align:right;top:952.22px;font-size:24px;line-height:30px;color:#2e2e2e;">89.2</div>
<div class="t" style="left:791px;top:992.16px;font-size:24px;line-height:30px;color:#2e2e2e;font-weight:normal;-webkit-text-stroke:0.55px #2e2e2e">2024<span class="k" style="margin-right:-0.15em">년</span> 8<span class="k" style="margin-right:-0.15em">월</span></div>
<div class="t" style="left:749px;width:300px;text-align:right;top:992.16px;font-size:24px;line-height:30px;color:#2e2e2e;">255.4</div>
<div class="a" style="left:779px;top:1027.1px;width:521px;height:40px;background:#f5f5f5"></div>
<div class="t" style="left:791px;top:1032.1px;font-size:24px;line-height:30px;color:#2e2e2e;font-weight:normal;-webkit-text-stroke:0.55px #2e2e2e">2024<span class="k" style="margin-right:-0.15em">년</span> 9<span class="k" style="margin-right:-0.15em">월</span></div>
<div class="t" style="left:749px;width:300px;text-align:right;top:1032.1px;font-size:24px;line-height:30px;color:#2e2e2e;">17.0</div>
<div class="t" style="left:791px;top:1072.04px;font-size:24px;line-height:30px;color:#2e2e2e;font-weight:normal;-webkit-text-stroke:0.55px #2e2e2e">2024<span class="k" style="margin-right:-0.15em">년</span> 12<span class="k" style="margin-right:-0.15em">월</span></div>
<div class="t" style="left:990px;width:300px;text-align:right;top:1072.04px;font-size:24px;line-height:30px;color:#2e2e2e;">9.8</div>
<div class="a" style="left:779px;top:1106px;width:521px;height:2px;background:#cfcfcf"></div>
<!-- DIALOG -->
<div class="a" style="left:1339px;top:362px;width:1065px;height:530px;background:#fff;border:2px solid #c6c6c6;border-radius:3px;box-shadow:4px 6px 0 0 #d6d6d6"></div>
<div class="t" style="left:1369px;top:382.0px;font-size:28px;line-height:36px;color:#2e2e2e;">Profit_ZN</div>
<svg style="left:2351px;top:387px" width="24" height="24"><path d="M1 1 L23 23 M23 1 L1 23" stroke="#666" stroke-width="2.2"/></svg>
<div class="a" style="left:1365px;top:432px;width:1012px;height:2px;background:#c6c6c6"></div>
<div class="t" style="left:1378px;top:446.5px;font-family:'Liberation Mono',monospace;font-size:29px;line-height:35px;color:#111;transform:scaleY(.86);transform-origin:0 50%;-webkit-text-stroke:0.4px #fff">ZN(<span style="color:#4f83ab">LOOKUP</span>(<span style="color:#4f83ab">SUM</span>(<span style="color:#e58a3f">[Profit]</span>),0))</div>
<svg style="left:2383px;top:618px" width="14" height="18"><path d="M0 0 L14 9 L0 18 Z" fill="#999"/></svg>
<div class="t" style="left:1365px;top:828.0px;font-size:24px;line-height:30px;color:#2e2e2e;"><span class="k" style="margin-right:-0.45em">계산이</span> <span class="k" style="margin-right:-0.75em">유효합니다</span>.</div>
<div class="a" style="left:2061px;top:820px;width:146px;height:46px;background:#d4d4d4;border-radius:2px"></div>
<div class="t" style="left:2134px;top:828.0px;font-size:24px;line-height:30px;color:#2e2e2e;transform:translateX(-50%)"><span class="k" style="margin-right:-0.30em">적용</span></div>
<div class="a" style="left:2231px;top:820px;width:146px;height:46px;background:#2c5f87;border-radius:2px"></div>
<div class="t" style="left:2304px;top:828.0px;font-size:24px;line-height:30px;color:#fff;transform:translateX(-50%);font-weight:bold"><span class="k" style="margin-right:-0.30em">확인</span></div>
<svg style="left:2384px;top:871px" width="16" height="17"><g fill="#aaa"><circle cx="14" cy="3" r="1.3"/><circle cx="8" cy="9" r="1.3"/><circle cx="14" cy="9" r="1.3"/><circle cx="2" cy="15" r="1.3"/><circle cx="8" cy="15" r="1.3"/><circle cx="14" cy="15" r="1.3"/></g></svg>

<!-- TAB BAR -->
<div class="a" style="left:0;top:1356px;width:2871px;height:63px;background:#e5e5e5;border-top:2px solid #cbcbcb;border-bottom:2px solid #cbcbcb"></div>
<div class="a" style="left:298px;top:1358px;width:92px;height:59px;background:#f8f8f8"></div>
<div class="a" style="left:212px;top:1358px;width:2px;height:59px;background:#cbcbcb"></div>
<div class="a" style="left:297px;top:1358px;width:2px;height:59px;background:#cbcbcb"></div>
<div class="a" style="left:389px;top:1358px;width:2px;height:59px;background:#cbcbcb"></div>
<div class="a" style="left:454px;top:1358px;width:2px;height:59px;background:#cbcbcb"></div>
<div class="a" style="left:518px;top:1358px;width:2px;height:59px;background:#cbcbcb"></div>
<div class="a" style="left:582px;top:1358px;width:2px;height:59px;background:#cbcbcb"></div>
<svg style="left:0;top:1350px" width="600" height="69"><g fill="none" stroke="#666" stroke-width="1.7"><ellipse cx="20.5" cy="29" rx="7.8" ry="3.8"/><path d="M12.7 29 V40.5 A7.8 3.8 0 0 0 28.3 40.5 V29"/></g><g fill="none" stroke="#5c5c5c" stroke-width="1.8"><path d="M421.7 40.7 H412.8 A1.6 1.6 0 0 1 411.2 39.1 V22.8 A1.6 1.6 0 0 1 412.8 21.2 H429.3 A1.6 1.6 0 0 1 430.9 22.8 V31.7"/></g><rect x="416" y="32.2" width="1.8" height="3.7" fill="#5c5c5c"/><rect x="420.3" y="26.2" width="1.8" height="9.7" fill="#5c5c5c"/><rect x="424.3" y="28.2" width="1.8" height="7.7" fill="#5c5c5c"/><path d="M432 34.1 V50 M424.1 42 H440" stroke="#5c5c5c" stroke-width="4"/><g fill="none" stroke="#5c5c5c" stroke-width="1.8"><path d="M484.9 40.7 H476.9 A1.6 1.6 0 0 1 475.3 39.1 V22.8 A1.6 1.6 0 0 1 476.9 21.2 H493.2 A1.6 1.6 0 0 1 494.8 22.8 V30.8 H475.3 M484.9 21.2 V40.7"/></g><path d="M496 34.1 V50 M488.2 42 H504" stroke="#5c5c5c" stroke-width="4"/><g fill="none" stroke="#5c5c5c" stroke-width="1.8" stroke-linejoin="miter"><path d="M559.3 31.7 V21 L549.5 25.2 L539.3 21 V38.7 L549.5 43.5 V25.2"/></g><path d="M560 34.1 V50 M552.2 42 H568" stroke="#5c5c5c" stroke-width="4"/></svg>
<div class="t" style="left:42px;top:1367px;font-size:24px;line-height:30px;color:#777"><span class="k" style="margin-right:-0.45em">데이터</span> <span class="k" style="margin-right:-0.30em">원본</span></div>
<div class="t" style="left:229px;top:1367px;font-size:24px;line-height:30px;color:#777"><span class="k" style="margin-right:-0.30em">시트</span> 1</div>
<div class="t" style="left:314px;top:1367px;font-size:24px;line-height:30px;color:#2b2b2b;font-weight:bold"><span class="k" style="margin-right:-0.30em">시트</span> 2</div>

</body></html>
